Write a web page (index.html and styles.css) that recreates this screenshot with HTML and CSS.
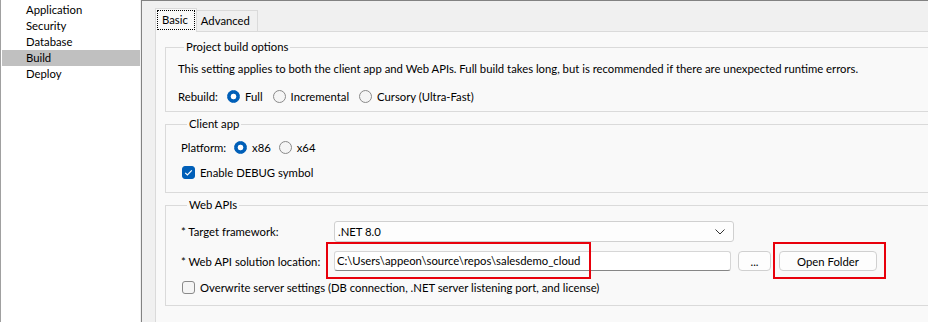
FILE: index.html
```html
<!DOCTYPE html>
<html lang="en">
<head>
    <meta charset="UTF-8">
    <meta name="viewport" content="width=device-width, initial-scale=1.0">
    <title>Project Properties - Build</title>
    <link rel="stylesheet" href="styles.css">
</head>
<body>

    <!-- Left category list -->
    <ul class="nav-list">
        <li>Application</li>
        <li>Security</li>
        <li>Database</li>
        <li class="selected">Build</li>
        <li>Deploy</li>
    </ul>

    <div class="main">
        <div class="tabs">
            <div class="tab active"><span class="focus">Basic</span></div>
            <div class="tab">Advanced</div>
        </div>

        <div class="tab-page">

            <fieldset class="group group-build">
                <legend>Project build options</legend>
                <p class="note">This setting applies to both the client app and Web APIs. Full build takes long, but is recommended if there are unexpected runtime errors.</p>
                <div class="row">
                    <span class="row-label rebuild-label">Rebuild:</span>
                    <span class="choice"><span class="radio is-on"></span>Full</span>
                    <span class="choice"><span class="radio"></span>Incremental</span>
                    <span class="choice"><span class="radio"></span>Cursory (Ultra-Fast)</span>
                </div>
            </fieldset>

            <fieldset class="group group-client">
                <legend>Client app</legend>
                <div class="row">
                    <span class="row-label platform-label">Platform:</span>
                    <span class="choice"><span class="radio is-on"></span>x86</span>
                    <span class="choice"><span class="radio"></span>x64</span>
                </div>
                <div class="row check-row">
                    <span class="checkbox is-on">
                        <svg width="13" height="13" viewBox="0 0 13 13"><path d="M3.2 6.8 L5.4 9 L9.8 4.4" fill="none" stroke="#fff" stroke-width="1.2"/></svg>
                    </span>
                    Enable DEBUG symbol
                </div>
            </fieldset>

            <fieldset class="group group-api">
                <legend>Web APIs</legend>
                <div class="row field-row">
                    <span class="field-label">* Target framework:</span>
                    <div class="select">
                        <span>.NET 8.0</span>
                        <svg width="10" height="6" viewBox="0 0 10 6"><path d="M0.5 0.5 L5 5 L9.5 0.5" fill="none" stroke="#333" stroke-width="1"/></svg>
                    </div>
                </div>
                <div class="row field-row location-row">
                    <span class="field-label">* Web API solution location:</span>
                    <div class="text-input">C:\Users\appeon\source\repos\salesdemo_cloud</div>
                    <button class="btn btn-browse">...</button>
                    <button class="btn btn-open">Open Folder</button>
                    <span class="mark mark-path"></span>
                    <span class="mark mark-open"></span>
                </div>
                <div class="row check-row overwrite-row">
                    <span class="checkbox"></span>
                    Overwrite server settings (DB connection, .NET server listening port, and license)
                </div>
            </fieldset>

        </div>
    </div>

</body>
</html>
```

FILE: styles.css
```css
body {
    margin: 0;
    width: 928px;
    height: 322px;
    overflow: hidden;
    display: flex;
    background-color: #f0f0f0;
    font-family: Lato, "Liberation Sans", Arial, sans-serif;
    font-size: 11.3px;
    color: #000;
}

/* Left category list */
.nav-list {
    flex-shrink: 0;
    list-style: none;
    margin: 0 1px 0 0;
    padding: 2px 0 0 1px;
    width: 138px;
    height: 100%;
    background-color: #fff;
    border-left: 1px solid #a0a0a0;
}

.nav-list li {
    height: 16px;
    line-height: 16px;
    padding-left: 24px;
}

.nav-list li.selected {
    background-color: #c0c0c0;
}

/* Right side */
.main {
    flex: 1 1 0;
    min-width: 0;
    border-top: 1px solid #828282;
    border-left: 1px solid #828282;
    padding: 7px 0 0 13px;
    overflow: hidden;
}

.tabs {
    display: flex;
    align-items: flex-end;
    height: 23px;
    position: relative;
    z-index: 1;
}

.tab {
    border: 1px solid #dadada;
    border-bottom: none;
    background-color: #f0f0f0;
    height: 20px;
    line-height: 20px;
    padding: 0 7px 0 4px;
    margin-left: -1px;
}

.tab.active {
    background-color: #f9f9f9;
    margin-bottom: -1px;
    margin-left: 0;
    padding: 1px;
    box-sizing: border-box;
    height: 24px;
}

.focus {
    display: block;
    border: 1px dotted #000;
    height: 18px;
    line-height: 17px;
    padding: 0 6px 0 4px;
}

.tab-page {
    width: 790px;
    height: 300px;
    border: 1px solid #dadada;
    background-color: #f9f9f9;
    padding-top: 7px;
}

/* Group boxes */
.group {
    width: 749px;
    margin: 0 0 0 9px;
    padding: 0;
    border: 1px solid #dadada;
}

.group legend {
    margin-left: 6px;
    padding: 0 2px;
    line-height: 16px;
}

.group + .group {
    margin-top: 4px;
}

.group-build {
    padding: 0 12px 7px;
}

.group-client,
.group-api {
    padding: 0 15px 10px;
}

.group-client {
    padding-bottom: 12px;
}

.note {
    margin: 6px 0 0;
    line-height: 16px;
}

.row {
    display: flex;
    align-items: center;
    height: 16px;
}

.group-build .row {
    margin-top: 11px;
}

.group-client .row {
    margin-top: 7px;
}

.group-client .check-row {
    margin-top: 9px;
}

.row-label {
    flex-shrink: 0;
}

.rebuild-label {
    width: 49px;
}

.platform-label {
    width: 53px;
}

.choice {
    display: flex;
    align-items: center;
    margin-right: 10px;
}

.group-client .choice {
    margin-right: 8px;
}

.radio {
    width: 11px;
    height: 11px;
    border: 1px solid #8a8a8a;
    border-radius: 50%;
    background-color: #f5f5f5;
    margin-right: 5px;
}

.radio.is-on {
    border-color: #005fb8;
    background: radial-gradient(circle, #fff 0 2.5px, #005fb8 3.2px);
}

.checkbox {
    width: 11px;
    height: 11px;
    border: 1px solid #8a8a8a;
    border-radius: 3px;
    background-color: #f5f5f5;
    margin: 0 5px 0 1px;
    position: relative;
}

.checkbox.is-on {
    border-color: #005fb8;
    background-color: #005fb8;
}

.checkbox svg {
    position: absolute;
    left: -1px;
    top: -1px;
}

/* Web API fields */
.field-row {
    height: 21px;
    margin-top: 8px;
    position: relative;
}

.location-row {
    height: 20px;
    margin-top: 9px;
}

.field-label {
    width: 153px;
    flex-shrink: 0;
}

.select {
    width: 387px;
    height: 19px;
    border: 1px solid #d0d0d0;
    border-radius: 3px;
    background-color: #fdfdfd;
    display: flex;
    align-items: center;
    justify-content: space-between;
    padding: 0 8px 0 3px;
}

.text-input {
    width: 393px;
    height: 18px;
    line-height: 18px;
    border: 1px solid #d6d6d6;
    border-bottom-color: #868686;
    border-radius: 3px;
    background-color: #fff;
    padding-left: 2px;
}

.btn {
    height: 20px;
    border: 1px solid #d0d0d0;
    border-radius: 4px;
    background-color: #fdfdfd;
    font-family: inherit;
    font-size: 11.3px;
    color: #000;
    padding: 0;
}

.btn-browse {
    width: 33px;
    margin-left: 7px;
}

.btn-open {
    width: 98px;
    margin-left: 8px;
}

/* Red annotation frames */
.mark {
    position: absolute;
    border: 2px solid #e8000b;
    top: -9px;
    height: 33px;
}

.mark-path {
    left: 145px;
    width: 261px;
}

.mark-open {
    left: 592px;
    width: 109px;
}

.overwrite-row {
    margin-top: 8px;
}
```
